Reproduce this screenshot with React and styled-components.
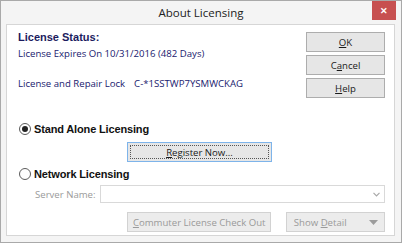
import { createGlobalStyle, styled } from "styled-components";

const GlobalStyle = createGlobalStyle`
  html, body {
    margin: 0;
    padding: 0;
    background: #ffffff;
  }
  * {
    box-sizing: border-box;
  }
`;

const uiFont = `"Open Sans", "Noto Sans", "Liberation Sans", sans-serif`;
const boldFont = `"Liberation Sans", Arial, sans-serif`;

const Window = styled.div`
  width: 402px;
  height: 243px;
  display: flex;
  flex-direction: column;
  background: #f4f4f4;
  border: 1px solid #a9a9a9;
  font-family: ${uiFont};
`;

const TitleBar = styled.div`
  height: 23px;
  display: grid;
  grid-template-columns: 1fr auto 1fr;
  align-items: start;
`;

const Title = styled.div`
  grid-column: 2;
  padding-top: 4px;
  font-size: 11.5px;
  color: #222222;
  line-height: 16px;
`;

const CloseButton = styled.div`
  grid-column: 3;
  justify-self: end;
  width: 24px;
  height: 19px;
  margin-right: 5px;
  background: #c75050;
  color: #ffffff;
  display: flex;
  align-items: center;
  justify-content: center;
  font-family: ${boldFont};
  font-weight: bold;
  font-size: 9px;
`;

const Panel = styled.div`
  flex: 1;
  margin: 0 6px 6px 5px;
  background: #ffffff;
  border: 1px solid #d6d6d6;
  padding: 4px 9px 0 11px;
  display: flex;
  flex-direction: column;
`;

const TopSection = styled.div`
  display: flex;
  justify-content: space-between;
`;

const Info = styled.div`
  display: flex;
  flex-direction: column;
`;

const StatusHeading = styled.div`
  font-family: ${boldFont};
  font-weight: bold;
  font-size: 11px;
  line-height: 14px;
  color: #1b1b5e;
  padding-top: 1px;
`;

const InfoLine = styled.div`
  margin-top: ${(p) => p.$gap}px;
  font-size: 9.6px;
  line-height: 14px;
  color: #20206e;
  display: flex;
  gap: 9px;
`;

const ButtonColumn = styled.div`
  display: flex;
  flex-direction: column;
  gap: 3px;
  padding-top: 3px;
`;

const DialogButton = styled.div`
  width: ${(p) => p.$width}px;
  height: 20px;
  display: flex;
  align-items: center;
  justify-content: center;
  gap: 22px;
  font-size: 9.6px;
  color: ${(p) => (p.$disabled ? "#9a9a9a" : "#1a1a1a")};
  background: ${(p) => (p.$disabled ? "#ececec" : "#e6e6e6")};
  border: 1px solid
    ${(p) => (p.$focused ? "#7eb4ea" : p.$disabled ? "#d2d2d2" : "#adadad")};
  position: relative;
`;

const FocusRing = styled.div`
  position: absolute;
  inset: 2px;
  border: 1px dotted #555555;
`;

const Key = styled.span`
  text-decoration: underline;
  text-underline-offset: 1px;
`;

const RadioRow = styled.div`
  margin-top: ${(p) => p.$gap}px;
  display: flex;
  align-items: center;
  gap: 3px;
  margin-left: 1px;
`;

const Radio = styled.div`
  width: 12px;
  height: 12px;
  border-radius: 50%;
  border: 1px solid #5c5c5c;
  background: #ffffff;
  display: flex;
  align-items: center;
  justify-content: center;

  &::after {
    content: "";
    width: 6px;
    height: 6px;
    border-radius: 50%;
    background: ${(p) => (p.$checked ? "#222222" : "transparent")};
  }
`;

const RadioLabel = styled.div`
  font-family: ${boldFont};
  font-weight: bold;
  font-size: 11px;
  letter-spacing: -0.15px;
  line-height: 14px;
  color: #111111;
`;

const CenterRow = styled.div`
  margin-top: ${(p) => p.$gap}px;
  padding-left: 109px;
  display: flex;
  gap: 15px;
`;

const ServerRow = styled.div`
  margin-top: 4px;
  display: flex;
  align-items: center;
  gap: 4px;
  padding-left: 17px;
`;

const ServerLabel = styled.div`
  font-size: 9.6px;
  color: #9a9a9a;
`;

const Combo = styled.div`
  flex: 1;
  height: 18px;
  border: 1px solid #d9d9d9;
  background: #ffffff;
  display: flex;
  align-items: center;
  justify-content: flex-end;
  padding-right: 4px;
`;

const Arrow = () => (
  <svg width="7" height="5" viewBox="0 0 7 5">
    <path d="M0.5 0.8 L3.5 3.8 L6.5 0.8" fill="none" stroke="#a8a8a8" strokeWidth="1.2" />
  </svg>
);

const Caret = () => (
  <svg width="9" height="5" viewBox="0 0 9 5">
    <path d="M0 0 L9 0 L4.5 5 Z" fill="#9c9c9c" />
  </svg>
);

export default function App() {
  return (
    <>
      <GlobalStyle />
      <Window>
        <TitleBar>
          <Title>About Licensing</Title>
          <CloseButton>✕</CloseButton>
        </TitleBar>
        <Panel>
          <TopSection>
            <Info>
              <StatusHeading>License Status:</StatusHeading>
              <InfoLine $gap={3}>License Expires On 10/31/2016 (482 Days)</InfoLine>
              <InfoLine $gap={16}>
                <span>License and Repair Lock</span>
                <span>C-*1SSTWP7YSMWCKAG</span>
              </InfoLine>
            </Info>
            <ButtonColumn>
              <DialogButton $width={79}>
                <span><Key>O</Key>K</span>
              </DialogButton>
              <DialogButton $width={79}>
                <span>C<Key>a</Key>ncel</span>
              </DialogButton>
              <DialogButton $width={79}>
                <span><Key>H</Key>elp</span>
              </DialogButton>
            </ButtonColumn>
          </TopSection>
          <RadioRow $gap={24}>
            <Radio $checked />
            <RadioLabel>Stand Alone Licensing</RadioLabel>
          </RadioRow>
          <CenterRow $gap={6}>
            <DialogButton $width={145} $focused>
              <FocusRing />
              <span><Key>R</Key>egister Now...</span>
            </DialogButton>
          </CenterRow>
          <RadioRow $gap={5}>
            <Radio />
            <RadioLabel>Network Licensing</RadioLabel>
          </RadioRow>
          <ServerRow>
            <ServerLabel>Server Name:</ServerLabel>
            <Combo>
              <Arrow />
            </Combo>
          </ServerRow>
          <CenterRow $gap={9}>
            <DialogButton $width={145} $disabled>
              <span><Key>C</Key>ommuter License Check Out</span>
            </DialogButton>
            <DialogButton $width={99} $disabled>
              <span>Show <Key>D</Key>etail</span>
              <Caret />
            </DialogButton>
          </CenterRow>
        </Panel>
      </Window>
    </>
  );
}
